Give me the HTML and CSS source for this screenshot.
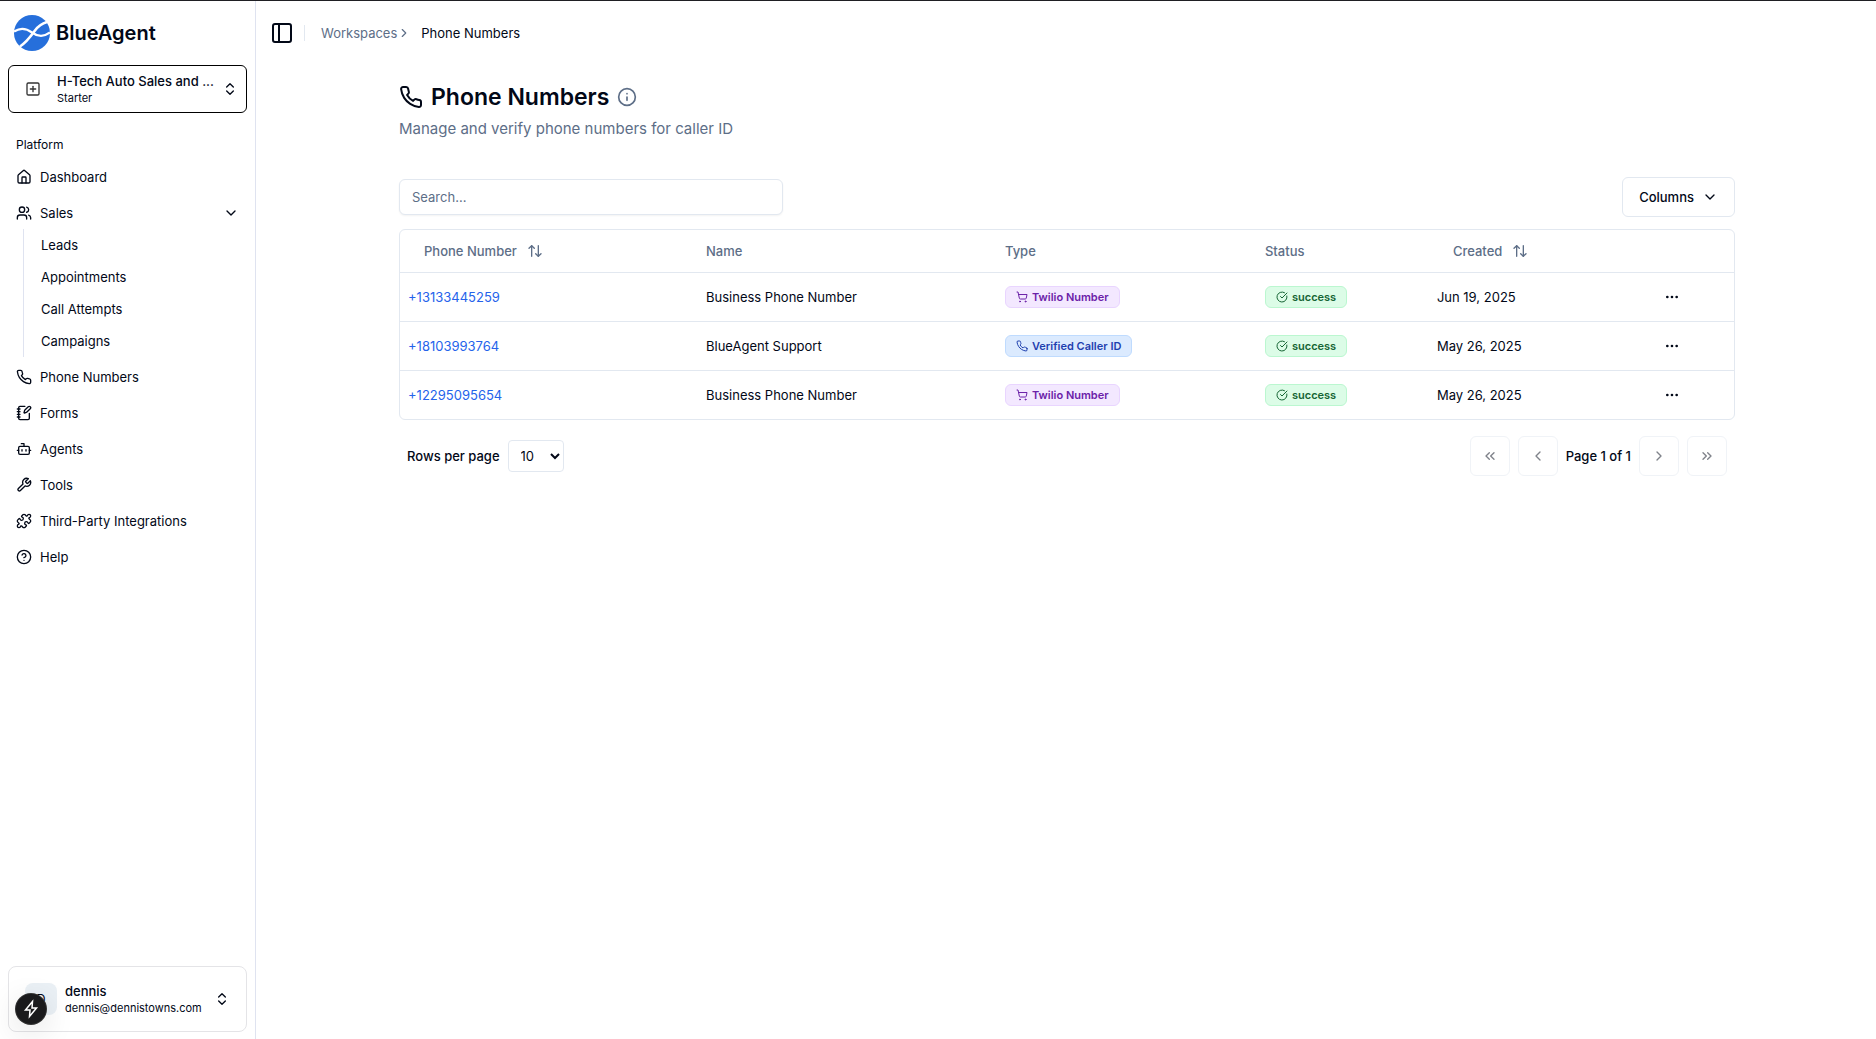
FILE: index.html
```html
<!DOCTYPE html>
<html lang="en">
<head>
    <meta charset="UTF-8">
    <meta name="viewport" content="width=device-width, initial-scale=1.0">
    <title>Phone Numbers - BlueAgent</title>
    <link rel="stylesheet" href="styles.css">
</head>
<body>
    <!-- Shared icons -->
    <svg class="icon-defs" aria-hidden="true">
        <symbol id="phone" viewBox="0 0 24 24"><path d="M22 16.92v3a2 2 0 0 1-2.18 2 19.79 19.79 0 0 1-8.63-3.07 19.5 19.5 0 0 1-6-6 19.79 19.79 0 0 1-3.07-8.67A2 2 0 0 1 4.11 2h3a2 2 0 0 1 2 1.72 12.84 12.84 0 0 0 .7 2.81 2 2 0 0 1-.45 2.11L8.09 9.91a16 16 0 0 0 6 6l1.27-1.27a2 2 0 0 1 2.11-.45 12.84 12.84 0 0 0 2.81.7A2 2 0 0 1 22 16.92z"/></symbol>
        <symbol id="chevrons-up-down" viewBox="0 0 24 24"><path d="m7 15 5 5 5-5"/><path d="m7 9 5-5 5 5"/></symbol>
        <symbol id="chevron-down" viewBox="0 0 24 24"><path d="m6 9 6 6 6-6"/></symbol>
        <symbol id="chevron-left" viewBox="0 0 24 24"><path d="m15 18-6-6 6-6"/></symbol>
        <symbol id="chevron-right" viewBox="0 0 24 24"><path d="m9 18 6-6-6-6"/></symbol>
        <symbol id="chevrons-left" viewBox="0 0 24 24"><path d="m11 17-5-5 5-5"/><path d="m18 17-5-5 5-5"/></symbol>
        <symbol id="chevrons-right" viewBox="0 0 24 24"><path d="m6 17 5-5-5-5"/><path d="m13 17 5-5-5-5"/></symbol>
        <symbol id="sort" viewBox="0 0 24 24"><path d="m3 8 4-4 4 4"/><path d="M7 4v16"/><path d="m21 16-4 4-4-4"/><path d="M17 20V4"/></symbol>
        <symbol id="cart" viewBox="0 0 24 24"><circle cx="8" cy="21" r="1"/><circle cx="19" cy="21" r="1"/><path d="M2.05 2.05h2l2.66 12.42a2 2 0 0 0 2 1.58h9.78a2 2 0 0 0 1.95-1.57l1.65-7.43H5.12"/></symbol>
        <symbol id="check" viewBox="0 0 24 24"><path d="M21.801 10A10 10 0 1 1 17 3.335"/><path d="m9 11 3 3L22 4"/></symbol>
        <symbol id="dots" viewBox="0 0 24 24"><circle cx="12" cy="12" r="1"/><circle cx="19" cy="12" r="1"/><circle cx="5" cy="12" r="1"/></symbol>
    </svg>

    <div class="layout">
        <aside class="sidebar">
            <a href="#" class="brand">
                <svg class="brand-logo" viewBox="0 0 36 36" aria-hidden="true">
                    <circle cx="18" cy="18" r="18" fill="#266fdb"/>
                    <path d="M0 16.500C6 12.500 12 13 18 17.500S30 22 36 17.500" fill="none" stroke="#fff" stroke-width="2.200"/>
                    <path d="M6 31.500C13 27 17 21 21 15.500S28 8.500 33 7" fill="none" stroke="#fff" stroke-width="2.600"/>
                </svg>
                <span>BlueAgent</span>
            </a>

            <button type="button" class="workspace">
                <span class="workspace-icon">
                    <svg class="icon" viewBox="0 0 24 24"><rect width="18" height="18" x="3" y="3" rx="2"/><path d="M8 12h8"/><path d="M12 8v8"/></svg>
                </span>
                <span class="stack">
                    <span class="stack-title">H-Tech Auto Sales and ...</span>
                    <span class="stack-sub">Starter</span>
                </span>
                <svg class="icon"><use href="#chevrons-up-down"/></svg>
            </button>

            <nav class="nav">
                <div class="nav-label">Platform</div>
                <a href="#" class="nav-item">
                    <svg class="icon" viewBox="0 0 24 24"><path d="M15 21v-8a1 1 0 0 0-1-1h-4a1 1 0 0 0-1 1v8"/><path d="M3 10a2 2 0 0 1 .709-1.528l7-5.999a2 2 0 0 1 2.582 0l7 5.999A2 2 0 0 1 21 10v9a2 2 0 0 1-2 2H5a2 2 0 0 1-2-2z"/></svg>
                    Dashboard
                </a>
                <div class="nav-group">
                    <button type="button" class="nav-item">
                        <svg class="icon" viewBox="0 0 24 24"><path d="M16 21v-2a4 4 0 0 0-4-4H6a4 4 0 0 0-4 4v2"/><circle cx="9" cy="7" r="4"/><path d="M22 21v-2a4 4 0 0 0-3-3.870"/><path d="M16 3.130a4 4 0 0 1 0 7.750"/></svg>
                        Sales
                        <svg class="icon push"><use href="#chevron-down"/></svg>
                    </button>
                    <div class="nav-sub">
                        <a href="#">Leads</a>
                        <a href="#">Appointments</a>
                        <a href="#">Call Attempts</a>
                        <a href="#">Campaigns</a>
                    </div>
                </div>
                <a href="#" class="nav-item">
                    <svg class="icon"><use href="#phone"/></svg>
                    Phone Numbers
                </a>
                <a href="#" class="nav-item">
                    <svg class="icon" viewBox="0 0 24 24"><path d="M13.400 2H6a2 2 0 0 0-2 2v16a2 2 0 0 0 2 2h12a2 2 0 0 0 2-2v-7.400"/><path d="M2 6h4"/><path d="M2 10h4"/><path d="M2 14h4"/><path d="M2 18h4"/><path d="M21.378 5.626a1 1 0 1 0-3.004-3.004l-5.010 5.012a2 2 0 0 0-.506.854l-.837 2.870a.5.5 0 0 0 .620.620l2.870-.837a2 2 0 0 0 .854-.506z"/></svg>
                    Forms
                </a>
                <a href="#" class="nav-item">
                    <svg class="icon" viewBox="0 0 24 24"><path d="M12 8V4H8"/><rect width="16" height="12" x="4" y="8" rx="2"/><path d="M2 14h2"/><path d="M20 14h2"/><path d="M15 13v2"/><path d="M9 13v2"/></svg>
                    Agents
                </a>
                <a href="#" class="nav-item">
                    <svg class="icon" viewBox="0 0 24 24"><path d="M14.700 6.300a1 1 0 0 0 0 1.400l1.600 1.600a1 1 0 0 0 1.400 0l3.770-3.770a6 6 0 0 1-7.940 7.940l-6.910 6.910a2.120 2.120 0 0 1-3-3l6.910-6.910a6 6 0 0 1 7.940-7.940l-3.760 3.760z"/></svg>
                    Tools
                </a>
                <a href="#" class="nav-item">
                    <svg class="icon" viewBox="0 0 24 24"><path d="M15.390 4.390a1 1 0 0 0 1.680-.474 2.500 2.500 0 1 1 3.014 3.015 1 1 0 0 0-.474 1.680l1.683 1.682a2.414 2.414 0 0 1 0 3.414L19.610 15.390a1 1 0 0 1-1.680-.474 2.500 2.500 0 1 0-3.014 3.015 1 1 0 0 1 .474 1.680l-1.683 1.682a2.414 2.414 0 0 1-3.414 0L8.610 19.610a1 1 0 0 0-1.680.474 2.500 2.500 0 1 1-3.014-3.015 1 1 0 0 0 .474-1.680l-1.683-1.682a2.414 2.414 0 0 1 0-3.414L4.390 8.610a1 1 0 0 1 1.680.474 2.500 2.500 0 1 0 3.014-3.015 1 1 0 0 1-.474-1.680l1.683-1.682a2.414 2.414 0 0 1 3.414 0z"/></svg>
                    Third-Party Integrations
                </a>
                <a href="#" class="nav-item">
                    <svg class="icon" viewBox="0 0 24 24"><circle cx="12" cy="12" r="10"/><path d="M9.090 9a3 3 0 0 1 5.830 1c0 2-3 3-3 3"/><path d="M12 17h.01"/></svg>
                    Help
                </a>
            </nav>

            <button type="button" class="user">
                <span class="avatar">D</span>
                <span class="stack">
                    <span class="stack-title">dennis</span>
                    <span class="stack-sub">dennis@dennistowns.com</span>
                </span>
                <svg class="icon"><use href="#chevrons-up-down"/></svg>
            </button>
        </aside>

        <main class="main">
            <header class="topbar">
                <button type="button" class="toggle" aria-label="Toggle sidebar">
                    <svg class="icon icon-lg" viewBox="0 0 24 24"><rect width="18" height="18" x="3" y="3" rx="2"/><path d="M9 3v18"/></svg>
                </button>
                <span class="divider"></span>
                <nav class="breadcrumb" aria-label="Breadcrumb">
                    <a href="#">Workspaces</a>
                    <svg class="icon icon-sm"><use href="#chevron-right"/></svg>
                    <span class="current">Phone Numbers</span>
                </nav>
            </header>

            <div class="content">
                <div class="heading">
                    <svg class="icon icon-lg"><use href="#phone"/></svg>
                    <h1>Phone Numbers</h1>
                    <button type="button" class="info" aria-label="More info">
                        <svg class="icon icon-md" viewBox="0 0 24 24"><circle cx="12" cy="12" r="10"/><path d="M12 16v-4"/><path d="M12 8h.01"/></svg>
                    </button>
                </div>
                <p class="subtitle">Manage and verify phone numbers for caller ID</p>

                <div class="toolbar">
                    <input type="text" class="search" placeholder="Search..." aria-label="Search">
                    <button type="button" class="btn columns">
                        Columns
                        <svg class="icon"><use href="#chevron-down"/></svg>
                    </button>
                </div>

                <div class="table-wrap">
                    <table>
                        <colgroup>
                            <col class="col-phone">
                            <col class="col-name">
                            <col class="col-type">
                            <col class="col-status">
                            <col class="col-created">
                            <col class="col-actions">
                        </colgroup>
                        <thead>
                            <tr>
                                <th><button type="button" class="sort">Phone Number <svg class="icon"><use href="#sort"/></svg></button></th>
                                <th>Name</th>
                                <th>Type</th>
                                <th>Status</th>
                                <th><button type="button" class="sort">Created <svg class="icon"><use href="#sort"/></svg></button></th>
                                <th></th>
                            </tr>
                        </thead>
                        <tbody>
                            <tr>
                                <td><a href="#" class="phone-link">+13133445259</a></td>
                                <td>Business Phone Number</td>
                                <td><span class="badge badge-twilio"><svg class="icon"><use href="#cart"/></svg>Twilio Number</span></td>
                                <td><span class="badge badge-success"><svg class="icon"><use href="#check"/></svg>success</span></td>
                                <td>Jun 19, 2025</td>
                                <td><button type="button" class="row-menu" aria-label="Open menu"><svg class="icon"><use href="#dots"/></svg></button></td>
                            </tr>
                            <tr>
                                <td><a href="#" class="phone-link">+18103993764</a></td>
                                <td>BlueAgent Support</td>
                                <td><span class="badge badge-verified"><svg class="icon"><use href="#phone"/></svg>Verified Caller ID</span></td>
                                <td><span class="badge badge-success"><svg class="icon"><use href="#check"/></svg>success</span></td>
                                <td>May 26, 2025</td>
                                <td><button type="button" class="row-menu" aria-label="Open menu"><svg class="icon"><use href="#dots"/></svg></button></td>
                            </tr>
                            <tr>
                                <td><a href="#" class="phone-link">+12295095654</a></td>
                                <td>Business Phone Number</td>
                                <td><span class="badge badge-twilio"><svg class="icon"><use href="#cart"/></svg>Twilio Number</span></td>
                                <td><span class="badge badge-success"><svg class="icon"><use href="#check"/></svg>success</span></td>
                                <td>May 26, 2025</td>
                                <td><button type="button" class="row-menu" aria-label="Open menu"><svg class="icon"><use href="#dots"/></svg></button></td>
                            </tr>
                        </tbody>
                    </table>
                </div>

                <div class="pagination">
                    <label for="rows">Rows per page</label>
                    <select id="rows" class="rows">
                        <option>10</option>
                        <option>20</option>
                        <option>50</option>
                    </select>
                    <div class="pager">
                        <button type="button" class="btn page-btn" aria-label="First page" disabled><svg class="icon"><use href="#chevrons-left"/></svg></button>
                        <button type="button" class="btn page-btn" aria-label="Previous page" disabled><svg class="icon"><use href="#chevron-left"/></svg></button>
                        <span class="page-info">Page 1 of 1</span>
                        <button type="button" class="btn page-btn" aria-label="Next page" disabled><svg class="icon"><use href="#chevron-right"/></svg></button>
                        <button type="button" class="btn page-btn" aria-label="Last page" disabled><svg class="icon"><use href="#chevrons-right"/></svg></button>
                    </div>
                </div>
            </div>
        </main>
    </div>

    <button type="button" class="dev-button" aria-label="Dev tools">
        <svg class="dev-icon" viewBox="0 0 20 20"><path d="M11.500 2.500 4.500 11h4.500l-.500 6.500L15.500 9H11z"/></svg>
    </button>
</body>
</html>
```
FILE: styles.css
```css
* {
    box-sizing: border-box;
}

body {
    margin: 0;
    font-family: Inter, sans-serif;
    font-size: 13px;
    line-height: 20px;
    color: #020817;
    background: #fff;
}

button, input, select {
    font: inherit;
    color: inherit;
}

button {
    background: none;
    border: none;
    padding: 0;
    cursor: pointer;
}

a {
    color: inherit;
    text-decoration: none;
}

.icon-defs {
    display: none;
}

.icon {
    width: 16px;
    height: 16px;
    flex-shrink: 0;
    fill: none;
    stroke: currentColor;
    stroke-width: 2;
    stroke-linecap: round;
    stroke-linejoin: round;
}

.icon-sm {
    width: 14px;
    height: 14px;
}

.icon-md {
    width: 20px;
    height: 20px;
}

.icon-lg {
    width: 24px;
    height: 24px;
}

.layout {
    display: flex;
    min-height: 100vh;
    border-top: 1px solid #1f1f23;
}

/* Sidebar */
.sidebar {
    display: flex;
    flex-direction: column;
    width: 256px;
    flex-shrink: 0;
    padding: 8px 8px 7px;
    border-right: 1px solid #dfe3f0;
}

.brand {
    display: flex;
    align-items: center;
    gap: 6px;
    padding: 6px;
    font-size: 20px;
    font-weight: 600;
}

.brand-logo {
    width: 36px;
    height: 36px;
}

.workspace, .user {
    display: flex;
    align-items: center;
    gap: 8px;
    text-align: left;
    border-radius: 6px;
}

.workspace {
    height: 48px;
    margin-top: 8px;
    padding: 0 8px;
    border: 1px solid #000;
}

.workspace-icon {
    display: flex;
    justify-content: center;
    width: 32px;
    color: #333;
}

.stack {
    display: flex;
    flex-direction: column;
    flex: 1;
    min-width: 0;
}

.stack-title {
    font-weight: 500;
    line-height: 18px;
    white-space: nowrap;
}

.stack-sub {
    font-size: 11px;
    line-height: 16px;
}

.nav {
    display: flex;
    flex-direction: column;
    gap: 4px;
    margin-top: 16px;
}

.nav-label {
    padding: 8px;
    font-size: 12px;
    line-height: 16px;
}

.nav-label + .nav-item {
    margin-top: -4px;
}

.nav-item {
    display: flex;
    align-items: center;
    gap: 8px;
    width: 100%;
    height: 32px;
    padding: 0 8px;
    text-align: left;
}

.push {
    margin-left: auto;
}

.nav-sub {
    display: flex;
    flex-direction: column;
    margin-left: 15px;
    border-left: 1px solid #dfe3f0;
}

.nav-sub a {
    padding: 6px 17px;
}

.user {
    margin-top: auto;
    height: 66px;
    padding: 0 16px;
    border: 1px solid #e4e4e7;
    border-radius: 8px;
}

.avatar {
    display: flex;
    align-items: center;
    justify-content: center;
    width: 32px;
    height: 32px;
    border-radius: 8px;
    background: #eaf0f5;
}

/* Main */
.main {
    flex: 1;
    min-width: 0;
    padding-left: 2px;
}

.topbar {
    display: flex;
    align-items: center;
    height: 64px;
    padding: 0 12px;
}

.toggle {
    display: flex;
}

.divider {
    width: 1px;
    height: 16px;
    margin: 0 16px 0 10px;
    background: #e2e8f0;
}

.breadcrumb {
    display: flex;
    align-items: center;
    color: #5d6e87;
}

.current {
    margin-left: 10px;
    color: #020817;
}

.content {
    max-width: 1400px;
    margin: 0 auto;
    padding: 16px 32px;
}

.heading {
    display: flex;
    align-items: center;
    gap: 8px;
}

h1 {
    margin: 0;
    font-size: 23px;
    line-height: 32px;
    font-weight: 600;
}

.info {
    display: flex;
    color: #5d6e87;
}

.subtitle {
    margin: 4px 0 0;
    font-size: 15px;
    line-height: 24px;
    color: #5d6e87;
}

.toolbar {
    display: flex;
    align-items: center;
    justify-content: space-between;
    margin-top: 36px;
}

.search {
    width: 384px;
    height: 36px;
    padding: 0 12px;
    border: 1px solid #e2e8f0;
    border-radius: 6px;
    background: #fff;
    box-shadow: 0 1px 2px rgba(0, 0, 0, 0.05);
}

.search::placeholder {
    color: #5d6e87;
    opacity: 1;
}

.btn {
    display: flex;
    align-items: center;
    justify-content: center;
    height: 40px;
    border: 1px solid #e2e8f0;
    border-radius: 6px;
    background: #fff;
}

.columns {
    gap: 8px;
    padding: 0 16px;
    font-weight: 500;
}

.table-wrap {
    margin-top: 12px;
    border: 1px solid #e2e8f0;
    border-radius: 6px;
    overflow: hidden;
}

table {
    width: 100%;
    table-layout: fixed;
    border-spacing: 0;
}

.col-phone {
    width: 22.340%;
}

.col-name {
    width: 22.410%;
}

.col-type {
    width: 19.490%;
}

.col-status {
    width: 12.890%;
}

.col-created {
    width: 16.420%;
}

.col-actions {
    width: 6.450%;
}

th, td {
    padding: 0 8px;
    text-align: left;
}

th {
    height: 43px;
    font-weight: 500;
    color: #5d6e87;
    border-bottom: 1px solid #e2e8f0;
}

td {
    height: 49px;
    border-bottom: 1px solid #e2e8f0;
}

tbody tr:last-child td {
    height: 48px;
    border-bottom: none;
}

.sort {
    display: flex;
    align-items: center;
    gap: 10px;
    padding: 0 16px;
}

.phone-link {
    color: #2563eb;
}

.badge {
    display: inline-flex;
    align-items: center;
    gap: 4px;
    padding: 2px 10px;
    border: 1px solid;
    border-radius: 6px;
    font-size: 11px;
    line-height: 16px;
    font-weight: 600;
    vertical-align: middle;
}

.badge .icon {
    width: 12px;
    height: 12px;
}

.badge-twilio {
    color: #6b21a8;
    background: #f3e8ff;
    border-color: #e9d5ff;
}

.badge-verified {
    color: #1e40af;
    background: #dbeafe;
    border-color: #bfdbfe;
}

.badge-success {
    color: #166534;
    background: #dcfce7;
    border-color: #bbf7d0;
}

.row-menu {
    display: flex;
    align-items: center;
    justify-content: center;
    width: 32px;
    height: 32px;
}

.pagination {
    display: flex;
    align-items: center;
    gap: 8px;
    padding: 16px 8px;
}

.pagination label {
    font-weight: 500;
}

.rows {
    width: 56px;
    height: 32px;
    padding: 0 0 0 8px;
    border: 1px solid #e2e8f0;
    border-radius: 4px;
    background: #fff;
}

.pager {
    display: flex;
    align-items: center;
    gap: 8px;
    margin-left: auto;
}

.page-info {
    font-weight: 500;
}

.page-btn {
    width: 40px;
}

.page-btn:disabled {
    opacity: 0.5;
}

/* Floating button over the page corner */
.dev-button {
    position: fixed;
    left: 16px;
    bottom: 15px;
    display: flex;
    align-items: center;
    justify-content: center;
    width: 30px;
    height: 30px;
    border-radius: 50%;
    background: #1a1a1c;
    color: #fff;
    box-shadow: 0 0 0 1px #333, 0 8px 32px rgba(0, 0, 0, 0.14);
}

.dev-icon {
    width: 20px;
    height: 20px;
    fill: none;
    stroke: currentColor;
    stroke-width: 1.5;
}
```
